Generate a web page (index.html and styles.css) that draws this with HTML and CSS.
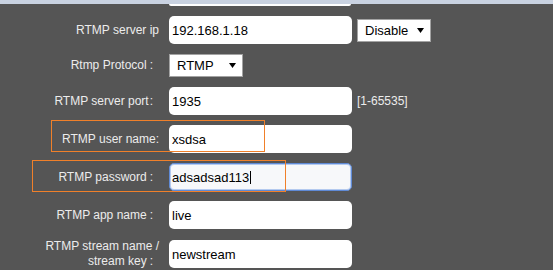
FILE: index.html
```html
<!DOCTYPE html>
<html>
<head>
<meta charset="utf-8">
<link rel="stylesheet" href="styles.css">
</head>
<body>
<div class="band"></div>
<div class="peek"></div>
<div class="form">
  <div class="row">
    <div class="label">RTMP server ip</div>
    <div class="field">192.168.1.18</div>
    <div class="select sel-disable"><span>Disable</span><svg class="arrow" width="7" height="5" viewBox="0 0 7 5"><path d="M0 0H7L3.5 5Z" fill="#000"/></svg></div>
  </div>
  <div class="row">
    <div class="label colon">Rtmp Protocol<span class="sep">:</span></div>
    <div class="select sel-proto"><span>RTMP</span><svg class="arrow" width="7" height="5" viewBox="0 0 7 5"><path d="M0 0H7L3.5 5Z" fill="#000"/></svg></div>
  </div>
  <div class="row">
    <div class="label colon">RTMP server port<span class="sep tight">:</span></div>
    <div class="field">1935</div>
    <div class="hint">[1-65535]</div>
  </div>
  <div class="row">
    <div class="label">RTMP user name:</div>
    <div class="field">xsdsa</div>
  </div>
  <div class="row">
    <div class="label colon">RTMP password<span class="sep">:</span></div>
    <div class="field focused">adsadsad113<span class="caret"></span></div>
  </div>
  <div class="row">
    <div class="label colon">RTMP app name<span class="sep">:</span></div>
    <div class="field">live</div>
  </div>
  <div class="row">
    <div class="label two">RTMP stream name /<br><span class="colon-line">stream key<span class="sep">:</span></span></div>
    <div class="field">newstream</div>
  </div>
</div>
<div class="mark mark-user"></div>
<div class="mark mark-pass"></div>
</body>
</html>
```
FILE: styles.css
```css
html, body {
  margin: 0;
  padding: 0;
}
body {
  background: #555555;
  font-family: "Liberation Sans", Arial, sans-serif;
  width: 553px;
  height: 270px;
  overflow: hidden;
  position: relative;
}
.band {
  height: 4px;
  background: #c9d2e1;
}
.peek {
  margin-left: 169px;
  width: 182px;
  height: 2px;
  background: #ffffff;
  border-radius: 0 0 3px 3px;
}
.form {
  display: flex;
  flex-direction: column;
  gap: 10px;
  padding-top: 10px;
}
.row {
  display: flex;
  align-items: center;
}
.label {
  width: 159px;
  flex: none;
  text-align: right;
  font-size: 12px;
  color: #ececec;
  line-height: 15px;
}
.label.colon {
  padding-right: 6px;
  box-sizing: border-box;
}
.sep {
  margin-left: 3px;
}
.sep.tight {
  margin-left: 1px;
}
.colon-line {
  padding-right: 6px;
}
.field {
  margin-left: 10px;
  width: 183px;
  height: 28px;
  box-sizing: border-box;
  background: #ffffff;
  border-radius: 5px;
  font-size: 13px;
  color: #000;
  padding-left: 3px;
  display: flex;
  align-items: center;
}
.field.focused {
  background: #f7f8fa;
  border: 1px solid #5f8ad6;
  box-shadow: inset 0 0 0 1px #b4caef;
  padding-left: 2px;
}
.caret {
  display: inline-block;
  width: 1px;
  height: 13px;
  background: #000;
  margin-left: 1px;
}
.select {
  height: 23px;
  box-sizing: border-box;
  background: #ffffff;
  border: 1px solid #a3a3a3;
  font-size: 13px;
  color: #000;
  display: flex;
  align-items: center;
  justify-content: space-between;
  padding: 0 6px 0 7px;
}
.sel-proto {
  margin-left: 10px;
  width: 74px;
}
.sel-disable {
  margin-left: 5px;
  width: 74px;
}
.arrow {
  display: block;
}
.hint {
  margin-left: 5px;
  font-size: 12px;
  color: #ececec;
}
.mark {
  position: absolute;
  border: 1px solid #f0802a;
  box-sizing: border-box;
}
.mark-user {
  left: 51px;
  top: 120px;
  width: 214px;
  height: 32px;
}
.mark-pass {
  left: 32px;
  top: 160px;
  width: 254px;
  height: 32px;
}
```
